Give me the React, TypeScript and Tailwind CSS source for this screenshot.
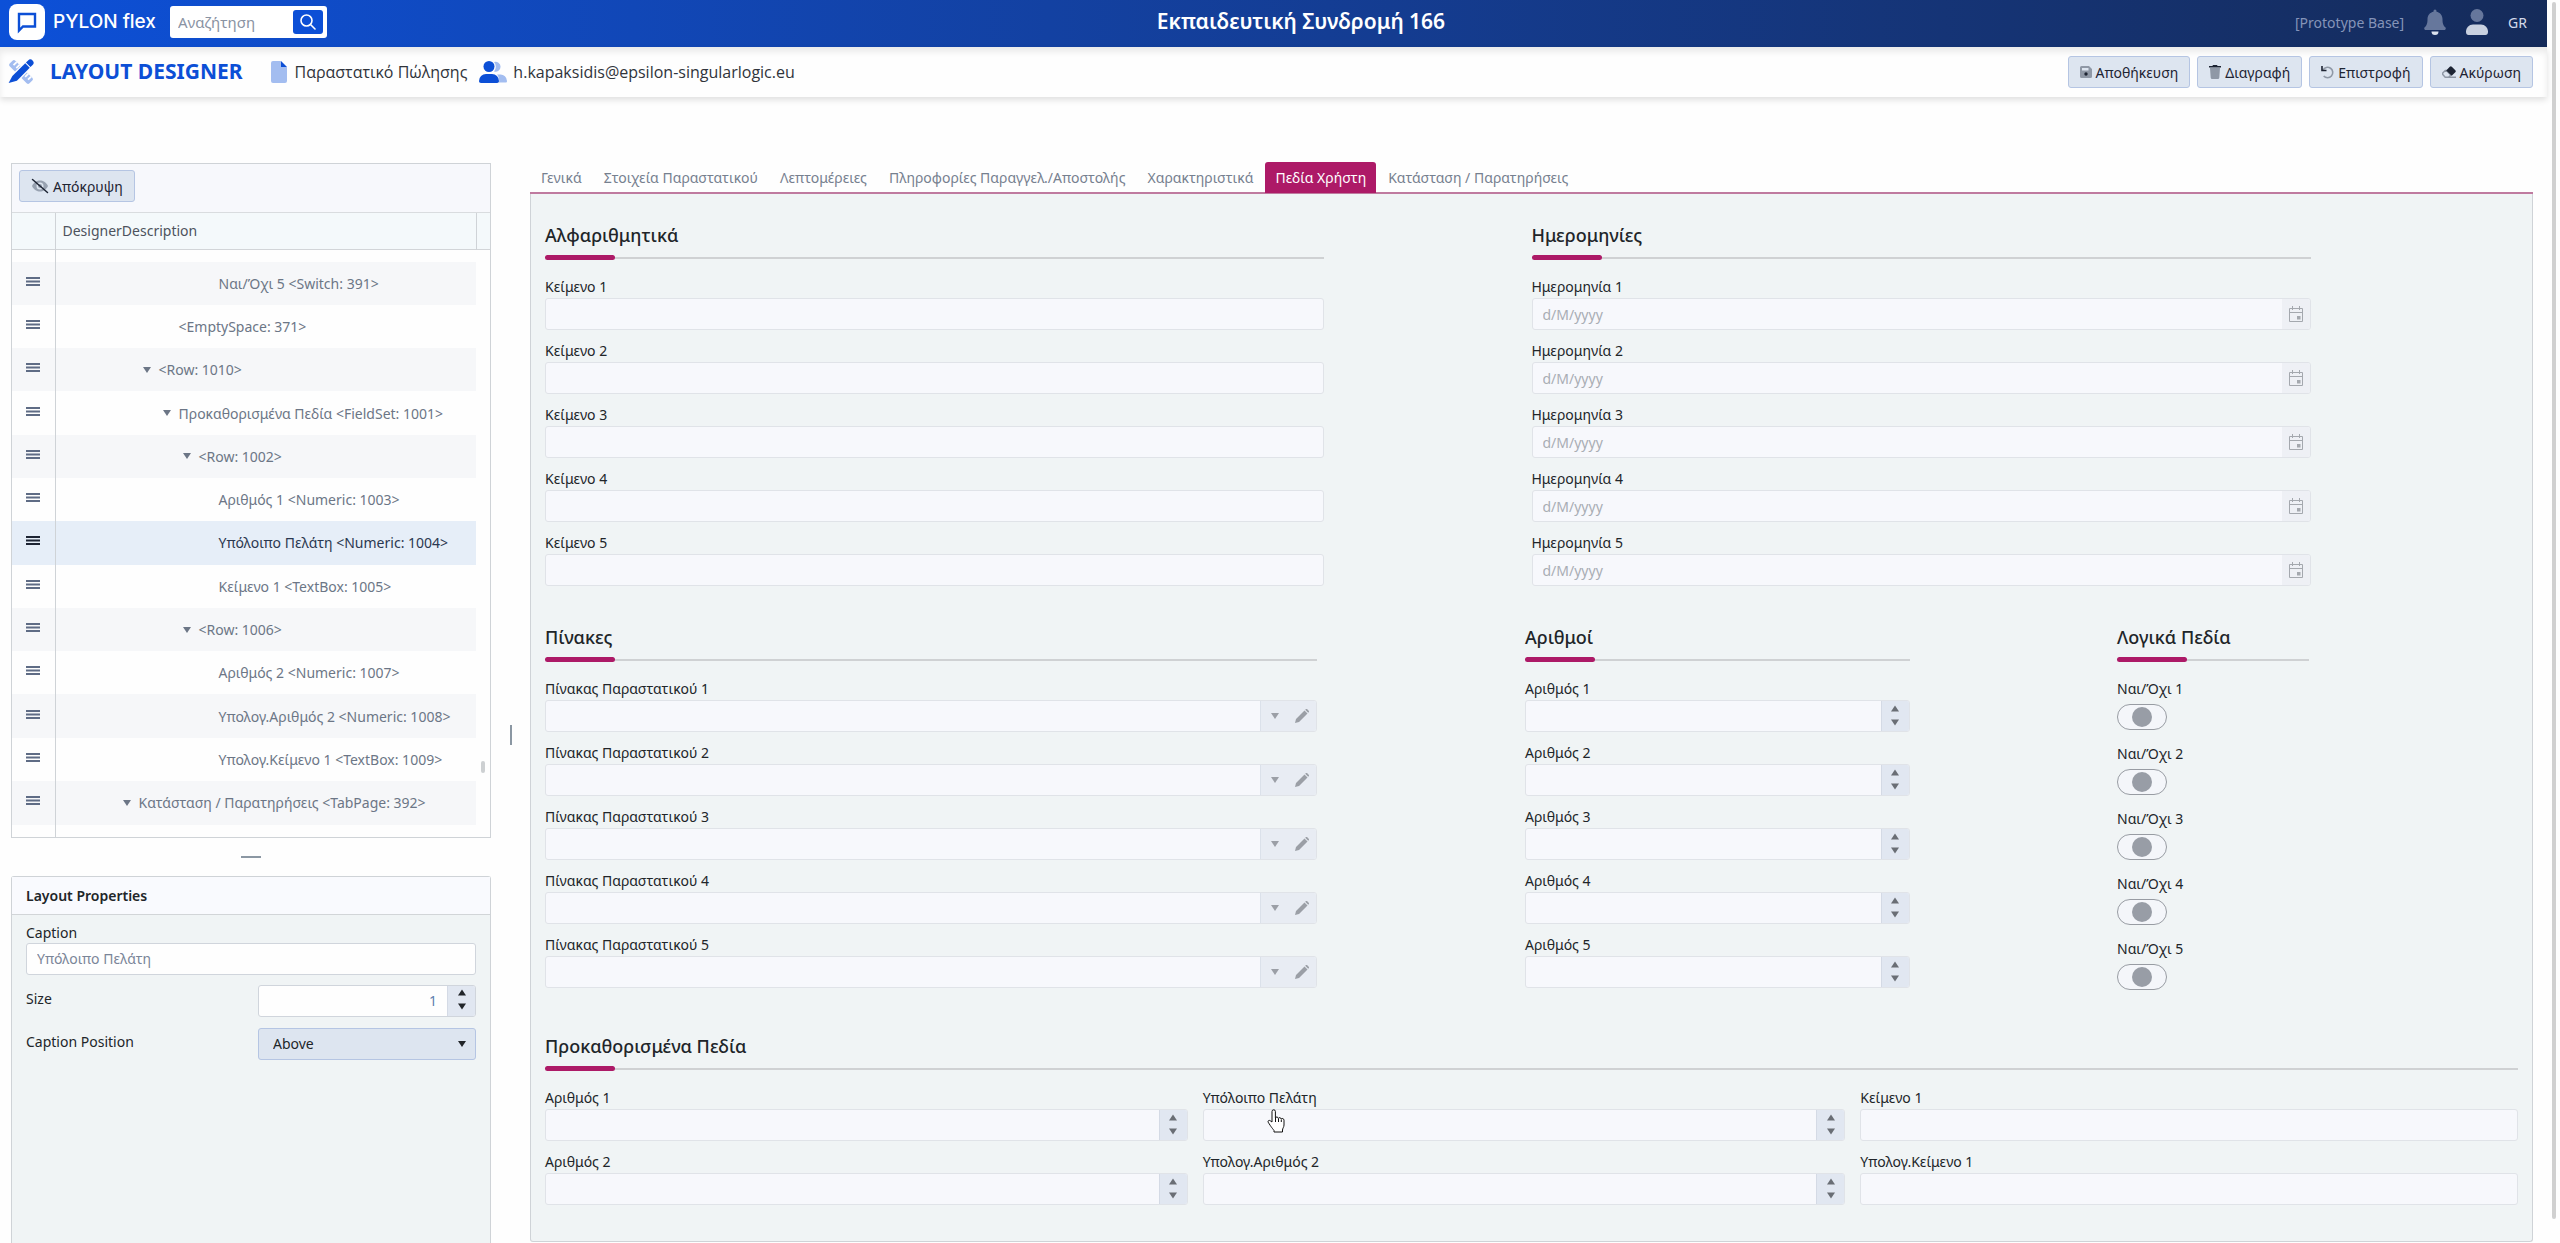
import type { ReactNode } from 'react'

type TreeRow = { level: number; text: string; leaf?: boolean; selected?: boolean }

const treeRows: TreeRow[] = [
  { level: 4, text: 'Ναι/Όχι 5 <Switch: 391>', leaf: true },
  { level: 2, text: '<EmptySpace: 371>', leaf: true },
  { level: 1, text: '<Row: 1010>' },
  { level: 2, text: 'Προκαθορισμένα Πεδία <FieldSet: 1001>' },
  { level: 3, text: '<Row: 1002>' },
  { level: 4, text: 'Αριθμός 1 <Numeric: 1003>', leaf: true },
  { level: 4, text: 'Υπόλοιπο Πελάτη <Numeric: 1004>', leaf: true, selected: true },
  { level: 4, text: 'Κείμενο 1 <TextBox: 1005>', leaf: true },
  { level: 3, text: '<Row: 1006>' },
  { level: 4, text: 'Αριθμός 2 <Numeric: 1007>', leaf: true },
  { level: 4, text: 'Υπολογ.Αριθμός 2 <Numeric: 1008>', leaf: true },
  { level: 4, text: 'Υπολογ.Κείμενο 1 <TextBox: 1009>', leaf: true },
  { level: 0, text: 'Κατάσταση / Παρατηρήσεις <TabPage: 392>' },
]

const indents = ['pl-[67px]', 'pl-[87px]', 'pl-[107px]', 'pl-[127px]', 'pl-[147px]']

const tabs = [
  'Γενικά',
  'Στοιχεία Παραστατικού',
  'Λεπτομέρειες',
  'Πληροφορίες Παραγγελ./Αποστολής',
  'Χαρακτηριστικά',
  'Πεδία Χρήστη',
  'Κατάσταση / Παρατηρήσεις',
]

const five = [1, 2, 3, 4, 5]

function LogoIcon() {
  return (
    <svg className="h-9 w-9" viewBox="0 0 36 36">
      <rect width="36" height="36" rx="8" fill="#fff" />
      <path d="M10 26.500V10h16v12.500H14z" fill="none" stroke="#0c4fd6" strokeWidth="2.400" />
    </svg>
  )
}

function DesignIcon() {
  return (
    <svg className="h-[26px] w-[26px]" viewBox="0 0 26 26">
      <g transform="rotate(-45 13 13)">
        <rect x="9" y="-1" width="8" height="28" rx="2" fill="#a3bdf0" />
        <path d="M12.500 2H17v1.800h-4.500zM12.500 6H17v1.800h-4.500zM12.500 18.500H17v1.800h-4.500zM12.500 22.500H17v1.800h-4.500z" fill="#fefefe" />
      </g>
      <g transform="rotate(45 13 13)">
        <path d="M8.500 2h9v22l-4.500 6-4.500-6z" fill="#fefefe" />
        <path d="M9.800 3.800h6.400V22L12 29.500 9.800 22z" fill="#0c4fd6" />
        <path d="M9.800 2.800V-.2a3.200 3.200 0 0 1 6.400 0v3z" fill="#0c4fd6" />
      </g>
    </svg>
  )
}

function DocumentIcon() {
  return (
    <svg className="h-[22px] w-4" viewBox="0 0 16 22">
      <path d="M2 0h8v6h6v14a2 2 0 0 1-2 2H2a2 2 0 0 1-2-2V2a2 2 0 0 1 2-2z" fill="#a3bdf0" />
      <path d="m10 0 6 6h-6z" fill="#0c4fd6" />
    </svg>
  )
}

function UsersIcon() {
  return (
    <svg className="h-[22px] w-7" viewBox="0 0 28 22">
      <path d="M15 1a5 5 0 1 1 0 9.500 7 7 0 0 0 0-9.500zM18 13.500h3a6.500 6.500 0 0 1 7 6.500c0 1-.5 1.500-1.500 1.500H20c.5-3-.3-6-2-8z" fill="#a3bdf0" />
      <circle cx="10" cy="5.500" r="5.500" fill="#0c4fd6" />
      <path d="M7 13h6a7 7 0 0 1 7 7c0 1-.7 2-2 2H2c-1.300 0-2-1-2-2a7 7 0 0 1 7-7z" fill="#0c4fd6" />
    </svg>
  )
}

function SearchIcon() {
  return (
    <svg className="h-4 w-4" viewBox="0 0 16 16" fill="none" stroke="#fff" strokeWidth="1.600" strokeLinecap="round">
      <circle cx="6.500" cy="6.500" r="5.500" />
      <path d="m10.500 10.500 4.500 4.500" />
    </svg>
  )
}

function BellIcon() {
  return (
    <svg className="h-[26px] w-[22px]" viewBox="0 0 22 26">
      <path d="M9.500 2a1.500 1.500 0 0 1 3 0v.7c3.500.7 6 3.500 6 7.300 0 5 1 6.500 2.800 8.300 1 1 .4 2.700-1.100 2.700H1.800C.3 21-.3 19.300.7 18.300 2.500 16.500 3.500 15 3.500 10c0-3.800 2.500-6.600 6-7.300z" fill="#66779c" />
      <path d="M7.500 22.500h7a3.500 3.500 0 0 1-7 0z" fill="#dbe2ee" />
    </svg>
  )
}

function UserIcon() {
  return (
    <svg className="h-[26px] w-[22px]" viewBox="0 0 22 26">
      <circle cx="11" cy="6.500" r="6.500" fill="#66779c" />
      <path d="M7 15.500h8a7 7 0 0 1 7 7.500c0 2-1 3-2.500 3h-17C1 26 0 25 0 23a7 7 0 0 1 7-7.500z" fill="#c9d1e0" />
    </svg>
  )
}

function SaveIcon() {
  return (
    <svg className="h-3 w-3" viewBox="0 0 12 12">
      <path fillRule="evenodd" d="M1.500 0H9l3 3v7.500A1.500 1.500 0 0 1 10.500 12h-9A1.500 1.500 0 0 1 0 10.500v-9A1.500 1.500 0 0 1 1.500 0zM2 2v2.500h6.500V2z" fill="#8f98a6" />
      <circle cx="6" cy="8" r="1.700" fill="#1d2433" />
    </svg>
  )
}

function TrashIcon() {
  return (
    <svg className="h-[14px] w-3" viewBox="0 0 12 14">
      <path d="M1 3h10l-.7 9.500c0 .9-.6 1.500-1.500 1.500H3.200c-.9 0-1.500-.6-1.500-1.500z" fill="#8f98a6" />
      <path d="M4 0h4l.6 1H12v1.500H0V1h3.400z" fill="#1d2433" />
    </svg>
  )
}

function UndoIcon() {
  return (
    <svg className="h-[13px] w-[13px]" viewBox="0 0 13 13" fill="none" strokeWidth="1.600">
      <path d="M2 4a5.200 5.200 0 1 1 .7 6" stroke="#8f98a6" />
      <path d="M1 0v4.500h4.500" stroke="#1d2433" />
    </svg>
  )
}

function EraserIcon() {
  return (
    <svg className="h-3 w-[14px]" viewBox="0 0 14 12">
      <path d="M3.800 4 1 6.800a1.400 1.400 0 0 0 0 2l2.200 2.400H14M3.800 4l5 5-2.200 2.200" fill="none" stroke="#8f98a6" strokeWidth="1.500" />
      <path d="m4.200 4.400 3.600-3.700a1.400 1.400 0 0 1 2 0l3.500 3.500a1.400 1.400 0 0 1 0 2L9.700 9.800z" fill="#1d2433" />
    </svg>
  )
}

function EyeOffIcon() {
  return (
    <svg className="h-4 w-[18px]" viewBox="0 0 18 16">
      <path fillRule="evenodd" d="M1 8c2-4 5-5.500 8-5.500S15 4 17 8c-2 4-5 5.500-8 5.500S3 12 1 8zm8-3.500a3.500 3.500 0 1 0 0 7 3.500 3.500 0 0 0 0-7z" fill="#98a2b1" />
      <circle cx="9" cy="8" r="2" fill="#98a2b1" />
      <path d="m1.500 1.500 15 13" stroke="#1d2433" strokeWidth="1.500" strokeLinecap="round" />
    </svg>
  )
}

function CalendarIcon() {
  return (
    <svg className="h-4 w-4" viewBox="0 0 16 16" fill="none" stroke="#a4a8ae">
      <path d="M1.500 2.500h13v13h-13zM1.500 6.500h13M4.500 0v4M11.500 0v4" />
      <path d="M9 10h3.500v3.500H9z" fill="#a4a8ae" stroke="none" />
    </svg>
  )
}

function PencilIcon() {
  return (
    <svg className="h-[14px] w-[14px]" viewBox="0 0 14 14" fill="#9b9fa6">
      <path d="m0 14 1-4L9.500 1.500l3 3L4 13zM10.200.8l.5-.5a1.200 1.200 0 0 1 1.600 0l1.400 1.400a1.200 1.200 0 0 1 0 1.600l-.5.5z" />
    </svg>
  )
}

function Triangle({ up, className }: { up?: boolean; className: string }) {
  return (
    <svg className={className} viewBox="0 0 8 6" fill="currentColor">
      <path d={up ? 'M0 6h8L4 0z' : 'M0 0h8L4 6z'} />
    </svg>
  )
}

function HandCursor() {
  return (
    <svg className="absolute top-[22px] left-16 h-6 w-[18px]" viewBox="0 0 18 24">
      <path
        d="M5 13V2.500a1.700 1.700 0 0 1 3.400 0V9c.3-1.500 2.800-1.300 3 .4.500-1.200 2.600-.9 2.800.6.700-.9 2.800-.6 2.800 1.200V16c0 2-1.500 3.500-1.500 5v2H7v-1.500c-1-1.500-3-3.500-5.800-8.300-.7-1.500 1-2.400 2.100-1.400z"
        fill="#fff"
        stroke="#111"
      />
      <path d="M8.500 9v4M11.500 9.500V13M14.300 10.500V13" stroke="#111" />
    </svg>
  )
}

function ToolButton({ icon, children }: { icon: ReactNode; children: ReactNode }) {
  return (
    <button className="flex h-8 items-center gap-1 rounded-[3px] border border-[#b5c5e3] bg-[#dde5f0] px-[11px] text-[14px] text-[#1d2433]">
      {icon}
      {children}
    </button>
  )
}

function Section({ title, className = '', children }: { title: string; className?: string; children: ReactNode }) {
  return (
    <section className={`pt-7 ${className}`}>
      <h2 className="text-[18px] leading-[26px] font-medium text-[#212529]">{title}</h2>
      <div className="mt-[7px] mb-4 flex items-center">
        <div className="h-[5px] w-[70px] rounded-sm bg-[#ad1a67]" />
        <div className="h-[2px] flex-1 bg-[#cfd1d3]" />
      </div>
      {children}
    </section>
  )
}

function Field({ id, label, children }: { id: string; label: string; children: ReactNode }) {
  return (
    <div className="mb-[10px]">
      <label htmlFor={id} className="block text-[14px] leading-[22px] text-[#212529]">
        {label}
      </label>
      <div className="flex h-8 overflow-hidden rounded-[3px] border border-[#e0e3e8] bg-[#f7f8fc]">{children}</div>
    </div>
  )
}

const inputClass = 'min-w-0 flex-1 bg-transparent px-[10px] text-[14px] outline-none placeholder:text-[#a9adb4]'

function TextField({ id, label }: { id: string; label: string }) {
  return (
    <Field id={id} label={label}>
      <input id={id} type="text" className={inputClass} />
    </Field>
  )
}

function DateField({ id, label }: { id: string; label: string }) {
  return (
    <Field id={id} label={label}>
      <input id={id} type="text" placeholder="d/M/yyyy" className={inputClass} />
      <button aria-label="Ημερολόγιο" className="flex w-7 items-center justify-center bg-[#eef0f5]">
        <CalendarIcon />
      </button>
    </Field>
  )
}

function LookupField({ id, label }: { id: string; label: string }) {
  return (
    <Field id={id} label={label}>
      <input id={id} type="text" className={inputClass} />
      <button aria-label="Λίστα" className="flex w-7 items-center justify-center border-l border-[#dbe1ea] bg-[#e8ecf3] text-[#9b9fa6]">
        <Triangle className="h-[6px] w-2" />
      </button>
      <button aria-label="Επεξεργασία" className="flex w-7 items-center justify-center bg-[#e8ecf3]">
        <PencilIcon />
      </button>
    </Field>
  )
}

function Spinner() {
  return (
    <div className="flex w-7 flex-col border-l border-[#d4dae5] bg-[#e1e7f1] pb-[2px]">
      <button aria-label="Αύξηση" className="flex flex-1 items-center justify-center">
        <Triangle up className="h-[7px] w-2" />
      </button>
      <button aria-label="Μείωση" className="flex flex-1 items-center justify-center">
        <Triangle className="h-[7px] w-2" />
      </button>
    </div>
  )
}

function NumericField({ id, label }: { id: string; label: string }) {
  return (
    <Field id={id} label={label}>
      <input id={id} type="text" inputMode="decimal" className={inputClass} />
      <div className="flex text-[#6a6e75]">
        <Spinner />
      </div>
    </Field>
  )
}

function SwitchField({ id, label }: { id: string; label: string }) {
  return (
    <div className="mb-[13px]">
      <label htmlFor={id} className="block text-[14px] leading-[22px] text-[#212529]">
        {label}
      </label>
      <div className="mt-1 grid h-[26px] w-[50px] place-items-center">
        <input
          id={id}
          type="checkbox"
          role="switch"
          className="col-start-1 row-start-1 h-[26px] w-[50px] appearance-none rounded-full border border-[#989ca3] bg-[#f4f6fa]"
        />
        <span className="pointer-events-none col-start-1 row-start-1 h-5 w-5 rounded-full bg-[#989da6]" />
      </div>
    </div>
  )
}

function Header() {
  return (
    <header className="flex h-[47px] items-center bg-linear-to-r from-[#0c50d8] to-[#152b5a] pr-5 pb-[3px] pl-[9px] text-white">
      <LogoIcon />
      <span className="ml-2 font-['Inter',sans-serif] text-[19px] font-medium">PYLON flex</span>
      <form className="ml-[14px] flex h-8 w-[157px] items-center rounded-[3px] bg-white pr-1 pl-2">
        <input
          type="search"
          aria-label="Αναζήτηση"
          placeholder="Αναζήτηση"
          className="min-w-0 flex-1 text-[15px] text-[#212529] outline-none placeholder:text-[#8a93a3]"
        />
        <button type="button" aria-label="Αναζήτηση" className="flex h-6 w-[30px] items-center justify-center rounded-[3px] bg-[#0c4fd6]">
          <SearchIcon />
        </button>
      </form>
      <h1 className="flex-1 pr-5 text-center text-[21px] font-semibold">Εκπαιδευτική Συνδρομή 166</h1>
      <span className="mr-5 text-[14px] text-[#8594b8]">[Prototype Base]</span>
      <button aria-label="Ειδοποιήσεις" className="mr-5">
        <BellIcon />
      </button>
      <button aria-label="Χρήστης" className="mr-5">
        <UserIcon />
      </button>
      <button className="text-[14px] text-[#d3daea]">GR</button>
    </header>
  )
}

function TitleBar() {
  return (
    <div className="flex h-[50px] items-center bg-[#fefefe] pr-[14px] pl-2 shadow-[0_3px_6px_rgba(0,0,0,0.12),inset_0_5px_6px_rgba(0,0,0,0.08)]">
      <DesignIcon />
      <span className="ml-4 text-[21px] font-bold text-[#0c4fd6]">LAYOUT DESIGNER</span>
      <div className="ml-7 flex items-center gap-2 font-['Open_Sans',sans-serif] text-[16px] text-[#30343b]">
        <DocumentIcon />
        <span>Παραστατικό Πώλησης</span>
      </div>
      <div className="ml-3 flex items-center gap-[6px] font-['Open_Sans',sans-serif] text-[16px] text-[#30343b]">
        <UsersIcon />
        <span>h.kapaksidis@epsilon-singularlogic.eu</span>
      </div>
      <div className="ml-auto flex gap-[7px]">
        <ToolButton icon={<SaveIcon />}>Αποθήκευση</ToolButton>
        <ToolButton icon={<TrashIcon />}>Διαγραφή</ToolButton>
        <ToolButton icon={<UndoIcon />}>Επιστροφή</ToolButton>
        <ToolButton icon={<EraserIcon />}>Ακύρωση</ToolButton>
      </div>
    </div>
  )
}

function DesignerTree() {
  return (
    <div className="relative border border-[#cfd3d7] bg-[#fefefe]">
      <div className="flex h-[49px] items-center border-b border-[#d9dcdf] bg-[#f7f8fc] px-[7px] pb-1">
        <ToolButton icon={<EyeOffIcon />}>Απόκρυψη</ToolButton>
      </div>
      <table className="w-full table-fixed text-[14px]">
        <thead>
          <tr className="h-9 border-b border-[#d2d5d8] bg-[#f4f9fb]">
            <th className="w-[43px] border-r border-[#cfd3d7]" />
            <th className="border-r border-[#cfd3d7] px-[7px] text-left font-normal text-[#4d535d]">DesignerDescription</th>
            <th className="w-[14px]" />
          </tr>
        </thead>
      </table>
      <table className="h-[587px] w-full table-fixed text-[14px]">
        <tbody>
          <tr className="h-3">
            <td className="w-[43px] border-r border-[#cfd3d7]" />
            <td />
            <td className="w-[14px]" />
          </tr>
          {treeRows.map((row, i) => {
            const bg = row.selected ? 'bg-[#e6eef8]' : i % 2 === 0 ? 'bg-[#f6f7f9]' : ''
            return (
              <tr key={row.text} className={row.selected ? 'text-[#2b3850]' : 'text-[#6c7686]'}>
                <td className={`border-r border-[#cfd3d7] pb-1 ${bg}`}>
                  <svg className={row.selected ? 'mx-auto h-[9px] w-[14px] text-[#1d2433]' : 'mx-auto h-[9px] w-[14px] text-[#5f6c85]'} viewBox="0 0 14 9" fill="currentColor">
                    <path d="M0 0h14v2H0zM0 3.500h14v2H0zM0 7h14v2H0z" />
                  </svg>
                </td>
                <td className={bg}>
                  <div className={`flex items-center ${indents[row.level]}`}>
                    <span className="flex w-4 items-center">{!row.leaf && <Triangle className="h-[6px] w-2" />}</span>
                    <span className="whitespace-nowrap">{row.text}</span>
                  </div>
                </td>
                <td />
              </tr>
            )
          })}
          <tr className="h-3">
            <td className="border-r border-[#cfd3d7]" />
            <td />
            <td />
          </tr>
        </tbody>
      </table>
      <div className="absolute right-[5px] bottom-16 h-3 w-1 rounded-full bg-[#cdd0d2]" />
    </div>
  )
}

function LayoutProperties() {
  return (
    <div className="flex-1 rounded-t-[3px] border border-b-0 border-[#cfd3d7] bg-[#f0f4f5]">
      <h2 className="flex h-[38px] items-center border-b border-[#d2d5d8] bg-[#f9fafe] px-[14px] text-[14px] font-semibold text-[#212529]">
        Layout Properties
      </h2>
      <div className="px-[14px] pt-2 text-[14px] text-[#212529]">
        <label htmlFor="caption" className="block leading-5">
          Caption
        </label>
        <input
          id="caption"
          type="text"
          defaultValue="Υπόλοιπο Πελάτη"
          className="h-8 w-full rounded-[3px] border border-[#d0d5dc] bg-[#fefefe] px-[10px] text-[#7a8598]"
        />
        <div className="mt-[10px] flex">
          <label htmlFor="size" className="flex-1 leading-7">
            Size
          </label>
          <div className="flex h-8 w-[218px] overflow-hidden rounded-[3px] border border-[#d0d5dc] bg-[#fefefe]">
            <input id="size" type="text" defaultValue="1" className="min-w-0 flex-1 px-[10px] text-right text-[#5f7fb0]" />
            <Spinner />
          </div>
        </div>
        <div className="mt-[11px] flex">
          <label htmlFor="position" className="flex-1 leading-7">
            Caption Position
          </label>
          <div className="relative w-[218px]">
            <select
              id="position"
              className="h-8 w-full appearance-none rounded-[3px] border border-[#b5c5e3] bg-[#dde5f0] px-[14px] text-[14px] text-[#212529]"
            >
              <option>Above</option>
            </select>
            <Triangle className="pointer-events-none absolute top-[13px] right-[10px] h-[6px] w-2" />
          </div>
        </div>
      </div>
    </div>
  )
}

function FormPanel() {
  return (
    <main className="flex min-w-0 flex-1 flex-col">
      <nav role="tablist" className="flex h-[31px] items-end gap-[2px] border-b-2 border-[#bf7a9f] pl-px">
        {tabs.map((tab) => (
          <button
            key={tab}
            role="tab"
            className={
              tab === 'Πεδία Χρήστη'
                ? '-mb-px h-[31px] rounded-t-[3px] bg-[#ad1a67] px-[10px] text-[14px] text-white'
                : 'h-[30px] px-[10px] text-[14px] text-[#76808f]'
            }
          >
            {tab}
          </button>
        ))}
      </nav>
      <div className="rounded-b-[3px] border border-t-0 border-[#cfd3d7] bg-[#f0f4f5] px-[14px] pb-[26px]">
        <div className="grid grid-cols-2">
          <Section title="Αλφαριθμητικά" className="w-[79%]">
            {five.map((n) => (
              <TextField key={n} id={`text-${n}`} label={`Κείμενο ${n}`} />
            ))}
          </Section>
          <Section title="Ημερομηνίες" className="w-[79%]">
            {five.map((n) => (
              <DateField key={n} id={`date-${n}`} label={`Ημερομηνία ${n}`} />
            ))}
          </Section>
        </div>
        <div className="grid grid-cols-[980fr_592fr_401fr] pb-[2px]">
          <Section title="Πίνακες" className="w-[79%] pr-[2px]">
            {five.map((n) => (
              <LookupField key={n} id={`table-${n}`} label={`Πίνακας Παραστατικού ${n}`} />
            ))}
          </Section>
          <Section title="Αριθμοί" className="w-[65%]">
            {five.map((n) => (
              <NumericField key={n} id={`number-${n}`} label={`Αριθμός ${n}`} />
            ))}
          </Section>
          <Section title="Λογικά Πεδία" className="w-[48%]">
            {five.map((n) => (
              <SwitchField key={n} id={`switch-${n}`} label={`Ναι/Όχι ${n}`} />
            ))}
          </Section>
        </div>
        <Section title="Προκαθορισμένα Πεδία">
          <div className="grid grid-cols-3">
            <div className="mr-[15px]">
              <NumericField id="preset-number-1" label="Αριθμός 1" />
              <NumericField id="preset-number-2" label="Αριθμός 2" />
            </div>
            <div className="relative mr-[15px]">
              <NumericField id="preset-balance" label="Υπόλοιπο Πελάτη" />
              <NumericField id="preset-calc-number" label="Υπολογ.Αριθμός 2" />
              <HandCursor />
            </div>
            <div>
              <TextField id="preset-text" label="Κείμενο 1" />
              <TextField id="preset-calc-text" label="Υπολογ.Κείμενο 1" />
            </div>
          </div>
        </Section>
      </div>
    </main>
  )
}

export default function App() {
  return (
    <div className="relative flex min-h-screen flex-col bg-[#fefefe] pr-[13px] font-['Noto_Sans',sans-serif]">
      <Header />
      <TitleBar />
      <div className="flex flex-1 pt-[66px] pr-[14px] pl-[11px]">
        <aside className="flex w-[480px] shrink-0 flex-col">
          <DesignerTree />
          <div className="flex h-[38px] items-center justify-center">
            <div className="h-[2px] w-5 bg-[#8b97a3]" />
          </div>
          <LayoutProperties />
        </aside>
        <div className="flex w-[39px] shrink-0 justify-center pt-[562px]">
          <div className="h-5 w-[2px] bg-[#8b97a3]" />
        </div>
        <FormPanel />
      </div>
      <div className="absolute top-[2px] right-1 bottom-6 w-1 rounded-full bg-[#d0d0d0]" />
    </div>
  )
}
